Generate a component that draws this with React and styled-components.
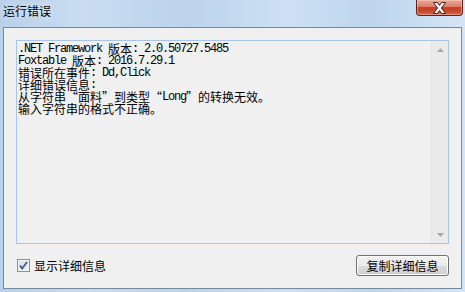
import React from "react";
import styled, { createGlobalStyle } from "styled-components";

const GlobalStyle = createGlobalStyle`
  html, body {
    margin: 0;
    padding: 0;
    background: #c3d8ef;
  }
`;

const cjkFont = `"Noto Sans CJK SC", "Noto Sans", sans-serif`;

const lines = [
  ".NET Framework 版本: 2.0.50727.5485",
  "Foxtable 版本: 2016.7.29.1",
  "错误所在事件: Dd,Click",
  "详细错误信息:",
  "从字符串“面料”到类型“Long”的转换无效。",
  "输入字符串的格式不正确。",
];

// split a line into quotes, wide (CJK) and narrow (ASCII) runs
const splitRuns = (text) =>
  text.split(/([“”]|[\u3000-\u9fff\uff00-\uffef]+)/).filter(Boolean);

const renderRun = (run, key) => {
  if (run === "“") return <Quote key={key} $side="right">{run}</Quote>;
  if (run === "”") return <Quote key={key} $side="left">{run}</Quote>;
  if (/[\u3000-\u9fff\uff00-\uffef]/.test(run)) return <Han key={key}>{run}</Han>;
  return <Latin key={key}>{run}</Latin>;
};

const App = () => {
  return (
    <>
      <GlobalStyle />
      <Window>
        <TitleBar>
          <Title>运行错误</Title>
          <CloseButton aria-label="关闭">
            <svg width="15" height="12" viewBox="0 0 15 12">
              <path
                d="M1.5 0.5 H5.2 L7.5 3.5 L9.8 0.5 H13.5 L9.4 6 L13.5 11.5 H9.8 L7.5 8.5 L5.2 11.5 H1.5 L5.6 6 Z"
                fill="#ffffff"
                stroke="#3b2a28"
                strokeWidth="1"
                strokeLinejoin="round"
              />
            </svg>
          </CloseButton>
        </TitleBar>
        <Client>
          <TextBox>
            <TextArea>
              {lines.map((line, i) => (
                <Line key={i}>{splitRuns(line).map((run, j) => renderRun(run, j))}</Line>
              ))}
            </TextArea>
            <ScrollBar>
              <ScrollArrow>
                <svg width="7" height="4" viewBox="0 0 7 4">
                  <path d="M0 4 L3.5 0 L7 4 Z" fill="#a7a7a7" />
                </svg>
              </ScrollArrow>
              <ScrollArrow>
                <svg width="7" height="4" viewBox="0 0 7 4">
                  <path d="M0 0 L7 0 L3.5 4 Z" fill="#a7a7a7" />
                </svg>
              </ScrollArrow>
            </ScrollBar>
          </TextBox>
          <Footer>
            <CheckLabel>
              <CheckBox>
                <svg width="9" height="9" viewBox="0 0 9 9">
                  <path
                    d="M1 4.5 L3.2 7.5 L8 1"
                    fill="none"
                    stroke="#3d5a99"
                    strokeWidth="1.8"
                  />
                </svg>
              </CheckBox>
              显示详细信息
            </CheckLabel>
            <Button>复制详细信息</Button>
          </Footer>
        </Client>
      </Window>
    </>
  );
};

export default App;

const Window = styled.div`
  width: 465px;
  height: 292px;
  box-sizing: border-box;
  display: flex;
  flex-direction: column;
  padding: 0 3px 3px 3px;
  background: linear-gradient(
      90deg,
      #b8d0ea 0%,
      #c9dcf1 18%,
      #bcd3ec 40%,
      #cde0f4 62%,
      #bed5ee 80%,
      #d3e4f6 100%
    );
  font-family: ${cjkFont};
`;

const TitleBar = styled.div`
  height: 27px;
  display: flex;
  align-items: flex-start;
  justify-content: space-between;
`;

const Title = styled.div`
  padding: 2px 0 0 0;
  font-size: 12px;
  line-height: 17px;
  color: #000;
  text-shadow: 0 0 6px rgba(255, 255, 255, 0.9);
`;

const CloseButton = styled.div`
  width: 47px;
  height: 16px;
  margin-right: -1px;
  box-sizing: border-box;
  display: flex;
  align-items: center;
  justify-content: center;
  border: 1px solid #5b2219;
  border-top: none;
  border-radius: 0 0 4px 4px;
  background: linear-gradient(
    180deg,
    #e8a999 0%,
    #db7d66 45%,
    #c6402a 50%,
    #c8462c 75%,
    #d66a45 100%
  );
  box-shadow: inset 0 0 0 1px rgba(255, 210, 200, 0.45);
`;

const Client = styled.div`
  flex: 1;
  display: flex;
  flex-direction: column;
  box-sizing: border-box;
  border: 1px solid #7b8898;
  background: #f0f0f0;
  padding: 12px 12px 11px 12px;
`;

const TextBox = styled.div`
  height: 204px;
  box-sizing: border-box;
  display: flex;
  border: 1px solid #a5c8ea;
  background: #f0f0f0;
`;

const TextArea = styled.div`
  flex: 1;
  padding: 2px 0 0 1px;
`;

const Line = styled.div`
  height: 12px;
  line-height: 12px;
  white-space: pre;
  color: #000;
`;

const Latin = styled.span`
  font-family: "Liberation Mono", monospace;
  font-size: 12px;
  letter-spacing: -1.2px;
  vertical-align: top;
`;

const Han = styled.span`
  font-family: ${cjkFont};
  font-size: 12px;
  vertical-align: top;
`;

const Quote = styled.span`
  display: inline-block;
  width: 12px;
  text-align: ${(p) => p.$side};
  font-family: ${cjkFont};
  font-size: 12px;
  vertical-align: top;
`;

const ScrollBar = styled.div`
  width: 16px;
  display: flex;
  flex-direction: column;
  justify-content: space-between;
  border-left: 1px solid #e4e4e4;
  background: #eaeaea;
`;

const ScrollArrow = styled.div`
  height: 17px;
  display: flex;
  align-items: center;
  justify-content: center;
`;

const Footer = styled.div`
  margin-top: 11px;
  display: flex;
  align-items: center;
  justify-content: space-between;
`;

const CheckLabel = styled.label`
  display: flex;
  align-items: center;
  gap: 4px;
  margin-left: 1px;
  font-size: 12px;
  color: #000;
`;

const CheckBox = styled.span`
  width: 13px;
  height: 13px;
  box-sizing: border-box;
  display: flex;
  align-items: center;
  justify-content: center;
  border: 1px solid #8e8f8f;
  background: linear-gradient(135deg, #dcdcdc 0%, #f3f3f3 100%);
  box-shadow: inset 0 0 0 1px #f4f4f4;
`;

const Button = styled.button`
  width: 93px;
  height: 21px;
  padding: 0;
  box-sizing: border-box;
  border: 1px solid #707070;
  border-radius: 3px;
  background: linear-gradient(
    180deg,
    #f2f2f2 0%,
    #ebebeb 50%,
    #dddddd 51%,
    #cfcfcf 100%
  );
  box-shadow: inset 0 0 0 1px #fcfcfc;
  font-family: ${cjkFont};
  font-size: 12px;
  line-height: 17px;
  color: #000;
`;
